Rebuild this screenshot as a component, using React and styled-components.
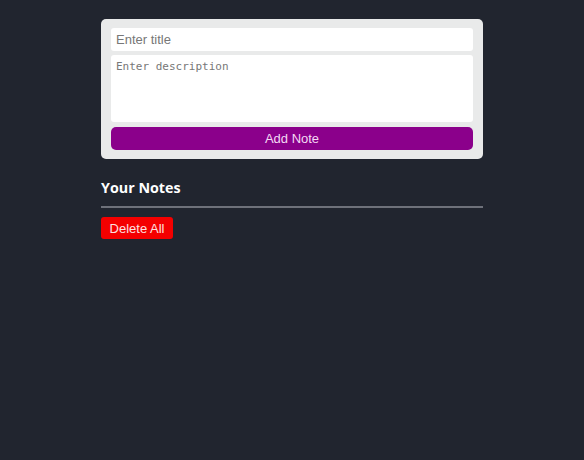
import React from "react";
import styled, { createGlobalStyle } from "styled-components";

const Global = createGlobalStyle`
  html, body { margin: 0; padding: 0; background: #21252f; }
  body { min-height: 460px; font-family: "Liberation Sans", Arial, sans-serif; }
`;

const Page = styled.div`
  width: 382px;
  margin: 0 auto;
  padding-top: 19px;
`;

const Card = styled.form`
  background: #e9eaea;
  border-radius: 5px;
  padding: 9px 10px;
  display: flex;
  flex-direction: column;
  gap: 4px;
`;

const TitleInput = styled.input`
  box-sizing: border-box;
  height: 23px;
  border: none;
  border-radius: 3px;
  background: #fff;
  padding: 0 5px;
  font: 13px "Liberation Sans", Arial, sans-serif;
  color: #333;
  &::placeholder { color: #777; }
`;

const Desc = styled.textarea`
  box-sizing: border-box;
  height: 67px;
  border: none;
  border-radius: 3px;
  background: #fff;
  padding: 5px 5px;
  resize: none;
  font: 11px "DejaVu Sans Mono", monospace;
  color: #333;
  &::placeholder { color: #777; }
`;

const AddButton = styled.button`
  margin-top: 1px;
  height: 23px;
  border: none;
  border-radius: 5px;
  background: #8b008b;
  color: #f3d9f3;
  font: 13px "Liberation Sans", Arial, sans-serif;
`;

const Heading = styled.h2`
  margin: 19px 0 0;
  color: #fff;
  font: 700 14.3px "Open Sans", sans-serif;
  line-height: 20px;
`;

const Rule = styled.div`
  height: 2px;
  background: #6e717a;
  margin-top: 8px;
`;

const DeleteButton = styled.button`
  margin-top: 9px;
  height: 22px;
  width: 72px;
  border: none;
  border-radius: 3px;
  background: #f40000;
  color: #fde0e0;
  font: 13px "Liberation Sans", Arial, sans-serif;
  padding: 0;
`;

export default function App() {
  return (
    <>
      <Global />
      <Page>
        <Card onSubmit={(e) => e.preventDefault()}>
          <TitleInput placeholder="Enter title" />
          <Desc placeholder="Enter description" />
          <AddButton type="submit">Add Note</AddButton>
        </Card>
        <Heading>Your Notes</Heading>
        <Rule />
        <DeleteButton>Delete All</DeleteButton>
      </Page>
    </>
  );
}
